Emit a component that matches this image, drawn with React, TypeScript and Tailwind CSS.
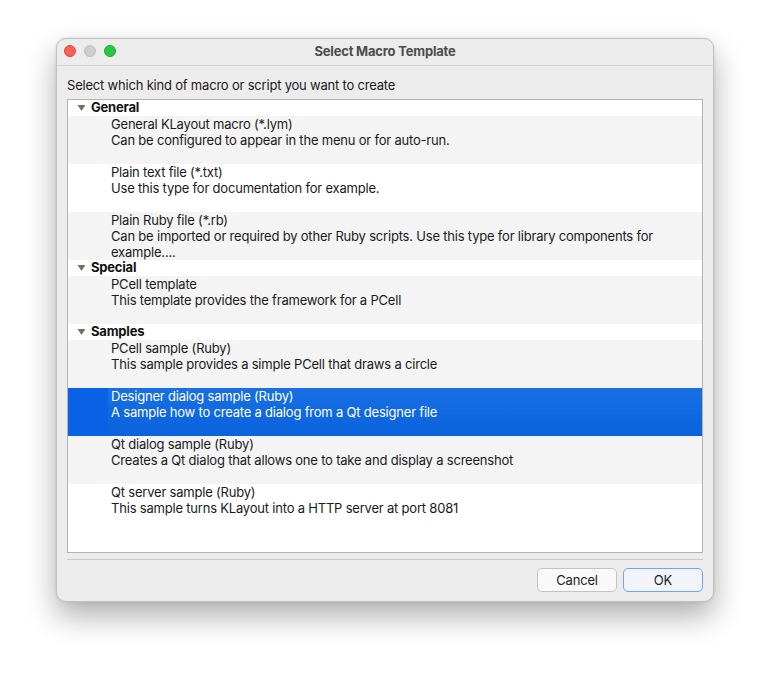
import React from "react";

type Item = { title: string; desc: string; extra?: string };
type Group = { name: string; items: Item[] };

const groups: Group[] = [
  {
    name: "General",
    items: [
      { title: "General KLayout macro (*.lym)", desc: "Can be configured to appear in the menu or for auto-run." },
      { title: "Plain text file (*.txt)", desc: "Use this type for documentation for example." },
      {
        title: "Plain Ruby file (*.rb)",
        desc: "Can be imported or required by other Ruby scripts. Use this type for library components for",
        extra: "example....",
      },
    ],
  },
  {
    name: "Special",
    items: [{ title: "PCell template", desc: "This template provides the framework for a PCell" }],
  },
  {
    name: "Samples",
    items: [
      { title: "PCell sample (Ruby)", desc: "This sample provides a simple PCell that draws a circle" },
      { title: "Designer dialog sample (Ruby)", desc: "A sample how to create a dialog from a Qt designer file" },
      { title: "Qt dialog sample (Ruby)", desc: "Creates a Qt dialog that allows one to take and display a screenshot" },
      { title: "Qt server sample (Ruby)", desc: "This sample turns KLayout into a HTTP server at port 8081" },
    ],
  },
];

const SELECTED = "Designer dialog sample (Ruby)";

function Triangle() {
  return (
    <svg width="9" height="8" viewBox="0 0 9 8" className="block">
      <path d="M0.5 1 L8.5 1 L4.5 7 Z" fill="#707070" />
    </svg>
  );
}

export default function App() {
  const rows: React.ReactNode[] = [];
  let idx = 0;
  groups.forEach((g) => {
    const alt = idx % 2 === 1;
    rows.push(
      <div
        key={"h-" + g.name}
        className={`flex h-[16px] items-center ${alt ? "bg-[#f4f4f4]" : "bg-white"}`}
      >
        <div className="w-[23px] flex justify-center pl-[3px]">
          <Triangle />
        </div>
        <span className="font-bold text-[#111]">{g.name}</span>
      </div>
    );
    idx++;
    g.items.forEach((it) => {
      const alt2 = idx % 2 === 1;
      const sel = it.title === SELECTED;
      rows.push(
        <div
          key={"i-" + it.title}
          className={`flex h-[48px] ${sel ? "bg-[#0862e3]" : alt2 ? "bg-[#f4f4f4]" : "bg-white"}`}
        >
          <div className="w-[40px] shrink-0" />
          <div
            className={`flex-1 flex flex-col pl-[3px] ${
              sel ? "bg-gradient-to-b from-[#1870e4] to-[#0a62dd] text-white" : "text-[#1a1a1a]"
            }`}
          >
            <div className="h-[16px] leading-[16px] whitespace-nowrap">{it.title}</div>
            <div className="h-[16px] leading-[16px] whitespace-nowrap">{it.desc}</div>
            <div className="h-[16px] leading-[16px] whitespace-nowrap">{it.extra ?? ""}</div>
          </div>
        </div>
      );
      idx++;
    });
  });

  return (
    <div
      className="w-[770px] h-[677px] bg-white pl-[56px] pt-[38px] text-[13px] tracking-[-0.2px]"
      style={{ fontFamily: "Inter, 'Noto Sans', sans-serif" }}
    >
      <div className="w-[658px] h-[564px] rounded-[10px] bg-[#ececec] border border-[#c2c2c2] shadow-[0_14px_30px_rgba(0,0,0,0.32),0_0_3px_rgba(0,0,0,0.12)] flex flex-col overflow-hidden">
        <div className="relative h-[27px] shrink-0 border-b border-[#d3d3d3] flex items-center justify-center">
          <div className="absolute left-[7px] top-[6px] flex gap-[8px]">
            <div className="w-[12px] h-[12px] rounded-full bg-[#fe5f57] border border-[#e2463f]" />
            <div className="w-[12px] h-[12px] rounded-full bg-[#cdcdcd] border border-[#bdbdbd]" />
            <div className="w-[12px] h-[12px] rounded-full bg-[#28c840] border border-[#1aab29]" />
          </div>
          <span className="font-bold text-[#4d4d4d]">Select Macro Template</span>
        </div>
        <div className="flex-1 flex flex-col px-[10px]">
          <div className="h-[16px] leading-[16px] mt-[11px] text-[#1a1a1a]">
            Select which kind of macro or script you want to create
          </div>
          <div className="mt-[6px] h-[454px] bg-white border border-[#b3b3b3] overflow-hidden">
            {rows}
          </div>
          <div className="mt-[6px] h-px bg-[#c9c9c9]" />
          <div className="mt-[8px] flex justify-end gap-[6px]">
            <button className="w-[80px] h-[24px] rounded-[5px] bg-[#f9f9f9] border border-[#c3c3c3] text-[#222] leading-[22px]">
              Cancel
            </button>
            <button className="w-[80px] h-[24px] rounded-[5px] bg-[#f1f4f9] border border-[#6ea5ee] text-[#222] leading-[22px]">
              OK
            </button>
          </div>
        </div>
      </div>
    </div>
  );
}
